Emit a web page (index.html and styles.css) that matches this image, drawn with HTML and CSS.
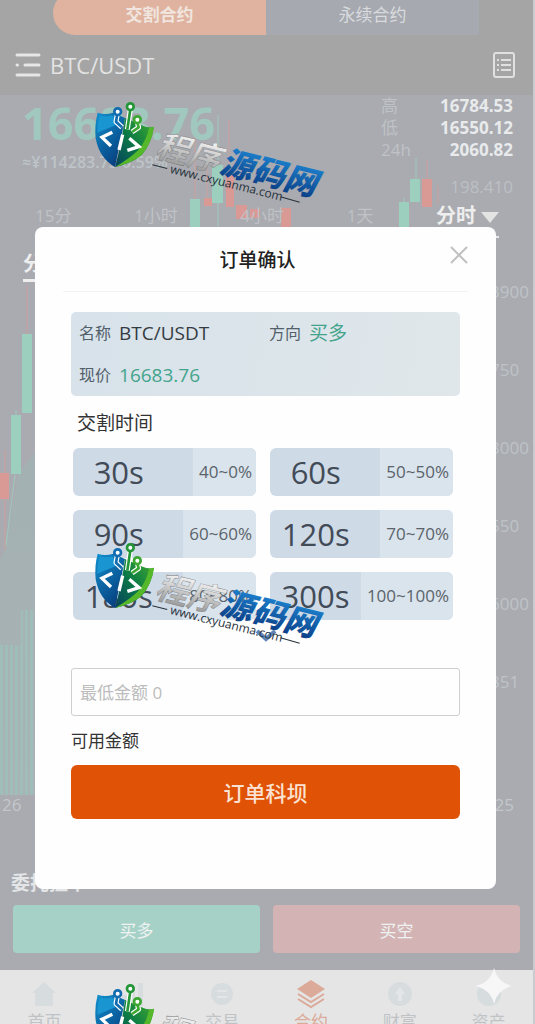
FILE: index.html
```html
<!DOCTYPE html>
<html lang="zh-CN">
<head>
    <meta charset="UTF-8">
    <meta name="viewport" content="width=device-width, initial-scale=1.0">
    <title>订单确认</title>
    <link rel="stylesheet" href="styles.css">
</head>
<body>

<div class="app">
    <header class="contract-tabs">
        <button class="active">交割合约</button>
        <button>永续合约</button>
    </header>

    <div class="symbol-bar">
        <svg width="26" height="26" viewBox="0 0 26 26" stroke="#e6e6e6" stroke-width="3" stroke-linecap="round">
            <path d="M2 3h22M10 13h14M2 13h0.5M2 23h22"/>
        </svg>
        <h1>BTC/USDT</h1>
        <svg class="orders-icon" width="24" height="26" viewBox="0 0 24 26" fill="none" stroke="#e0e0e0" stroke-width="2">
            <rect x="2" y="1" width="20" height="24" rx="2"/>
            <path d="M9 8h10M9 13h10M9 18h10M5 8h2M5 13h2M5 18h2"/>
        </svg>
    </div>

    <main class="market">
        <svg class="candles" viewBox="0 95 533 875" preserveAspectRatio="none">
            <defs>
                <pattern id="bars" width="5" height="10" patternUnits="userSpaceOnUse">
                    <rect width="3" height="10" fill="#9fbdb9"/>
                </pattern>
                <linearGradient id="area" x1="0" y1="0" x2="0" y2="1">
                    <stop offset="0" stop-color="#a3b1b3"/>
                    <stop offset="1" stop-color="#a9b2b5"/>
                </linearGradient>
            </defs>
            <path d="M0 560L5 550L18 475L35 452V795H0z" fill="url(#area)"/>
            <path d="M0 645H21V610H35V795H0z" fill="url(#bars)"/>
            <g stroke="#cda09f">
                <path d="M27 285v49M5 450v100M195 135v64M229 120v56M427 160v20M207 165v32M438 185v20"/>
            </g>
            <g stroke="#9fc9bd">
                <path d="M218 115v112M416 158v22M404 198v10M16 410v5M15 475L6 545"/>
            </g>
            <g fill="#9ccfbe">
                <path d="M22 334h10v79h-10zM11 415h10v59h-10zM190 199h10v28h-10zM212 165h11v38h-11zM410 179h10v23h-10zM399 202h10v25h-10z"/>
            </g>
            <g fill="#d99a96">
                <path d="M0 473h9v26h-9zM226 175h8v32h-8zM204 198h8v8h-8zM236 205h11v14h-11zM250 209h10v9h-10zM281 208h10v19h-10zM422 179h10v28h-10z"/>
            </g>
        </svg>

        <section class="ticker">
            <div>
                <div class="price">16683.76</div>
                <div class="sub-price">≈¥114283.75 0.59%</div>
            </div>
            <dl>
                <dt>高</dt><dd>16784.53</dd>
                <dt>低</dt><dd>16550.12</dd>
                <dt>24h</dt><dd>2060.82</dd>
            </dl>
            <span class="peak">198.410</span>
        </section>

        <nav class="periods">
            <button>15分</button>
            <button>1小时</button>
            <button>4小时</button>
            <button>1天</button>
            <button class="active">分时<i></i></button>
        </nav>

        <section class="chart">
            <button class="chart-tab">分时</button>
            <div class="axis">
                <span>3900</span>
                <span>750</span>
                <span>3000</span>
                <span>550</span>
                <span>6000</span>
                <span>351</span>
            </div>
        </section>
        <div class="times"><span>26</span><span>25</span></div>

        <h2>委托挂单</h2>
        <div class="actions">
            <button class="buy">买多</button>
            <button class="sell">买空</button>
        </div>
    </main>

    <nav class="bottom-nav">
        <a href="#">
            <svg viewBox="0 0 28 28"><path d="M14 2L26 13H23V26H5V13H2z"/></svg>首页</a>
        <a href="#">
            <svg viewBox="0 0 28 28"><path d="M3 15h5v11H3zM11 8h5v18h-5zM19 3h5v23h-5z"/></svg>行情</a>
        <a href="#">
            <svg viewBox="0 0 28 28"><circle cx="14" cy="14" r="11"/><path d="M9 11h10M9 17h10" stroke="#e3e5e6" stroke-width="2"/></svg>交易</a>
        <a href="#" class="active">
            <svg viewBox="0 0 28 28"><path d="M14 0L28 9L14 18L0 9z"/><path d="M1 14L14 22L27 14M1 19L14 27L27 19" fill="none" stroke="#dbaa98" stroke-width="2"/></svg>合约</a>
        <a href="#">
            <svg viewBox="0 0 28 28"><circle cx="14" cy="14" r="12"/><path d="M14 7l5 7h-3v7h-4v-7h-3z" fill="#e3e5e6"/></svg>财富</a>
        <a href="#">
            <svg viewBox="0 0 28 28"><circle cx="14" cy="14" r="12"/></svg>资产</a>
    </nav>
</div>

<div class="overlay">
    <form class="modal">
        <div class="modal-header">
            <h3>订单确认</h3>
            <button type="button" class="close" aria-label="关闭">
                <svg width="18" height="18" viewBox="0 0 18 18" stroke="#c0c0c0" stroke-width="2"><path d="M1 1L17 17M17 1L1 17"/></svg>
            </button>
        </div>

        <div class="info">
            <p>名称 <b>BTC/USDT</b></p>
            <p>方向 <b class="green">买多</b></p>
            <p>现价 <b class="green">16683.76</b></p>
        </div>

        <h4>交割时间</h4>
        <div class="options">
            <button type="button"><span class="time">30s</span><span class="rate">40~0%</span></button>
            <button type="button"><span class="time">60s</span><span class="rate">50~50%</span></button>
            <button type="button"><span class="time">90s</span><span class="rate">60~60%</span></button>
            <button type="button"><span class="time">120s</span><span class="rate">70~70%</span></button>
            <button type="button"><span class="time">180s</span><span class="rate">80~80%</span></button>
            <button type="button"><span class="time">300s</span><span class="rate">100~100%</span></button>
        </div>
        <button type="button" class="more" aria-label="更多">
            <svg width="24" height="14" viewBox="0 0 24 14" fill="none" stroke="#5f84b8" stroke-width="4"><path d="M3 2L12 10L21 2"/></svg>
        </button>

        <input type="text" id="amount" placeholder="最低金额 0">
        <label for="amount">可用金额</label>
        <button type="submit" class="submit">订单科坝</button>
    </form>
</div>

<div class="watermarks">
    <svg viewBox="0 0 750 360">
        <defs>
            <linearGradient id="blue" x1="0" y1="0" x2="0.6" y2="1">
                <stop offset="0" stop-color="#1191cf"/>
                <stop offset="1" stop-color="#07407f"/>
            </linearGradient>
            <linearGradient id="green" x1="1" y1="0" x2="0" y2="1">
                <stop offset="0" stop-color="#45ad2c"/>
                <stop offset="0.5" stop-color="#0b7b45"/>
                <stop offset="1" stop-color="#07405f"/>
            </linearGradient>
            <linearGradient id="silver" x1="0" y1="0" x2="0" y2="1">
                <stop offset="0.2" stop-color="#f6f6f6"/>
                <stop offset="0.9" stop-color="#979797"/>
            </linearGradient>
            <linearGradient id="word" x1="0" y1="0" x2="0" y2="1">
                <stop offset="0.2" stop-color="#1c7fcc"/>
                <stop offset="0.9" stop-color="#0b3f86"/>
            </linearGradient>
            <g id="logo">
                <path d="M53 68Q75 76 100 68L135 84L105 231Q58 205 47 145Q43 105 53 68z" fill="url(#blue)"/>
                <path d="M135 84L190 108Q205 114 222 110Q215 160 185 195Q155 220 105 231Q125 160 135 84z" fill="url(#green)"/>
                <path d="M60 76Q78 82 96 76L120 100L52 128Q52 95 60 76z" fill="#1996d2"/>
                <path d="M222 110Q215 160 185 195Q155 220 105 231Q150 205 175 180Q200 150 207 115z" fill="#55b82b"/>
                <g fill="none" stroke="#fff" stroke-width="15" stroke-linejoin="round">
                    <path d="M112 72L108 95L126 112M151 58L142 118M172 97L176 112L156 126"/>
                </g>
                <g fill="none" stroke-width="8" stroke-linejoin="round">
                    <path d="M112 72L108 95L126 112" stroke="#126cb0"/>
                    <path d="M151 58L142 118" stroke="#249638"/>
                    <path d="M172 97L176 112L156 126" stroke="#3ca832"/>
                </g>
                <g fill="#fff" stroke-width="8">
                    <circle cx="113" cy="65" r="10" stroke="#126cb0"/>
                    <circle cx="151" cy="50" r="10" stroke="#249638"/>
                    <circle cx="172" cy="89" r="10" stroke="#3ca832"/>
                </g>
                <path d="M97 127L66 142L93 168M128 134L117 180M148 145L177 170L142 181" fill="none" stroke="#fff" stroke-width="10"/>
                <g transform="translate(218 204) rotate(14)">
                    <text class="word silver" x="2" y="-6" font-size="98" fill="url(#silver)" stroke="#6d7073" stroke-width="1">程序</text>
                    <text class="word" x="202" y="-6" font-size="98" fill="url(#word)">源码网</text>
                    <path d="M4 20H50M400 20L460 22" stroke="#26313b" stroke-width="3"/>
                    <text class="url" x="60" y="31" font-size="36" fill="#26313b">www.cxyuanma.com</text>
                </g>
            </g>
        </defs>
        <use href="#logo"/>
    </svg>
    <svg viewBox="0 0 750 360"><use href="#logo"/></svg>
    <svg viewBox="0 0 750 360"><use href="#logo"/></svg>
</div>

<svg class="sparkle" viewBox="0 0 36 36"><path d="M18 0Q21 14 36 18Q21 22 18 36Q15 22 0 18Q15 14 18 0z" fill="#f7f7f7"/></svg>

</body>
</html>
```

FILE: styles.css
```css
* {
    box-sizing: border-box;
}
body {
    margin: 0;
    position: relative;
    font-family: "Open Sans", "Noto Sans CJK SC", sans-serif;
    font-size: 17px;
    color: #333;
    overflow: hidden;
}
h1, h2, h3, h4, p, dl, dd {
    margin: 0;
    font-weight: normal;
}
button {
    border: none;
    padding: 0;
    background: none;
    font: inherit;
    color: inherit;
}

/* trading page */
.app {
    display: flex;
    flex-direction: column;
    height: 100vh;
    background: #a9abb0;
    border-right: 2px solid #c9cbcf;
    overflow: hidden;
}
.contract-tabs {
    display: flex;
    flex: none;
    height: 44px;
    margin-top: -9px;
    padding: 0 54px 0 53px;
    background: #a5a5a5;
}
.contract-tabs button {
    flex: 1;
    background: #a6a9b0;
    color: #d9dbde;
    font-size: 17px;
}
.contract-tabs .active {
    background: #dfb39f;
    color: #f1e6df;
    font-weight: bold;
    border-radius: 22px 0 0 22px;
}
.symbol-bar {
    display: flex;
    flex: none;
    align-items: center;
    height: 60px;
    padding: 0 17px 0 15px;
    background: #a5a5a5;
}
.symbol-bar h1 {
    margin-left: 9px;
    font-size: 22px;
    color: #e3e3e3;
}
.orders-icon {
    margin-left: auto;
}
.market {
    position: relative;
    display: flex;
    flex: 1;
    flex-direction: column;
    padding-bottom: 17px;
}
.candles {
    position: absolute;
    width: 100%;
    height: 100%;
}
.ticker, .periods, .chart, .times, .market h2, .actions {
    position: relative;
}
.ticker {
    display: grid;
    grid-template-columns: 1fr 132px;
    height: 105px;
    padding: 0 20px 0 22px;
}
.price {
    font-size: 45px;
    font-weight: bold;
    line-height: 56px;
    color: #a0c8be;
}
.sub-price {
    line-height: 22px;
    font-size: 16px;
    font-weight: 600;
    color: #bec4c8;
}
.ticker dl {
    display: grid;
    grid-template-columns: auto auto;
    justify-content: space-between;
    line-height: 22px;
    height: 66px;
}
.ticker dt {
    color: #bfc2c6;
}
.ticker dd {
    text-align: right;
    font-weight: bold;
    color: #e8eaec;
}
.peak {
    grid-column: 2;
    text-align: right;
    line-height: 20px;
    color: #bcc0c4;
}
.periods {
    display: flex;
    justify-content: space-between;
    height: 38px;
    padding: 0 34px 0 35px;
    color: #bfc2c6;
}
.periods button {
    height: 28px;
}
.periods .active {
    height: 38px;
    padding-bottom: 8px;
    border-bottom: 2px solid #e8eaec;
    font-size: 20px;
    font-weight: bold;
    color: #eeeeee;
}
.periods i {
    display: inline-block;
    margin-left: 5px;
    border: 9px solid transparent;
    border-top: 11px solid #e3e3e3;
    border-bottom: 0;
}
.chart {
    display: flex;
    flex: 1;
    justify-content: space-between;
    align-items: flex-start;
    padding: 8px 0 0 23px;
}
.chart-tab {
    height: 36px;
    border-bottom: 3px solid #eeeeee;
    font-size: 20px;
    font-weight: bold;
    color: #eeeeee;
}
.axis {
    display: flex;
    flex-direction: column;
    width: 43px;
    padding-top: 7px;
    line-height: 78px;
    color: #bfc3c7;
}
.times {
    display: flex;
    justify-content: space-between;
    height: 20px;
    margin-bottom: 53px;
    padding: 0 19px 0 2px;
    line-height: 20px;
    color: #c3c7ca;
}
.market h2 {
    margin-left: 11px;
    font-size: 19px;
    font-weight: bold;
    line-height: 30px;
    color: #e3e5e7;
}
.actions {
    display: flex;
    gap: 13px;
    padding: 7px 13px 0;
}
.actions button {
    flex: 1;
    height: 48px;
    border-radius: 4px;
    color: #eef2f2;
}
.buy {
    background: #a5d1c6;
}
.actions .sell {
    background: #d3b3b3;
}
.bottom-nav {
    display: grid;
    grid-template-columns: repeat(6, 1fr);
    flex: none;
    height: 54px;
    background: #e5e5e5;
    overflow: hidden;
}
.bottom-nav a {
    display: flex;
    flex-direction: column;
    align-items: center;
    padding-top: 9px;
    line-height: 26px;
    color: #c0c3c5;
    text-decoration: none;
}
.bottom-nav svg {
    flex: none;
    width: 28px;
    height: 30px;
    fill: #d7dcdf;
}
.bottom-nav .active {
    color: #dbaa98;
}
.bottom-nav .active svg {
    fill: #dbaa98;
}

/* order confirmation */
.overlay {
    position: absolute;
    inset: 0;
    padding: 227px 39px 0 35px;
}
.modal {
    display: flex;
    flex-direction: column;
    padding: 0 36px 70px;
    background: #fefefe;
    border-radius: 8px;
}
.modal-header {
    display: grid;
    grid-template-columns: 1fr auto 1fr;
    align-items: center;
    height: 65px;
    margin: 0 -8px 20px;
    padding-right: 16px;
    border-bottom: 1px solid #f3f3f3;
}
.modal-header h3 {
    grid-column: 2;
    font-size: 19px;
    font-weight: 500;
    color: #222;
}
.close {
    display: flex;
    justify-self: end;
    margin: 0 -16px 8px 0;
}
.info {
    display: grid;
    grid-template-columns: 190px 1fr;
    height: 84px;
    padding: 0 8px;
    line-height: 42px;
    font-size: 16px;
    color: #51606a;
    background: linear-gradient(100deg, #d8e2ea, #dfe7ea);
    border-radius: 5px;
}
.info p {
    display: flex;
    gap: 8px;
}
.info b {
    font-size: 19px;
    font-weight: normal;
    color: #333b42;
}
.info .green {
    color: #43a48c;
}
.modal h4 {
    margin: 13px 6px 11px;
    font-size: 19px;
    line-height: 28px;
}
.options {
    display: grid;
    grid-template-columns: 1fr 1fr;
    gap: 14px;
    margin: 0 7px 0 2px;
}
.options button {
    display: flex;
    height: 48px;
    line-height: 48px;
    background: #cfdae7;
    border-radius: 6px;
    overflow: hidden;
    color: #424b58;
}
.time {
    width: 50%;
    font-size: 31px;
}
.rate {
    margin-left: auto;
    padding: 0 4px 0 6px;
    background: #dae4ec;
    color: #5b636b;
}
.more {
    height: 32px;
    margin-bottom: 16px;
}
.modal input {
    height: 48px;
    width: 100%;
    padding: 0 8px;
    border: 1px solid #cfcfcf;
    border-radius: 3px;
    background: #fefefe;
    font: inherit;
}
.modal input::placeholder {
    color: #bcbcbc;
}
.modal label {
    margin: 10px 0 9px;
    line-height: 30px;
}
.submit {
    height: 54px;
    border-radius: 6px;
    background: #e05206;
    color: #fbe3d3;
    font-size: 21px;
    font-weight: 500;
}

/* site watermark */
.watermarks {
    position: absolute;
    inset: 0;
    display: flex;
    flex-direction: column;
    gap: 321px;
    padding: 90px 0 0 80px;
    overflow: hidden;
    pointer-events: none;
}
.watermarks svg {
    flex: none;
    width: 250px;
    height: 120px;
}
.word {
    font-family: "Noto Sans CJK SC", sans-serif;
    font-style: italic;
    font-weight: 900;
}
.silver {
    font-weight: 700;
}
.url {
    font-family: "Open Sans", sans-serif;
}
.sparkle {
    position: absolute;
    right: 23px;
    bottom: 20px;
    width: 36px;
    height: 36px;
}
```
